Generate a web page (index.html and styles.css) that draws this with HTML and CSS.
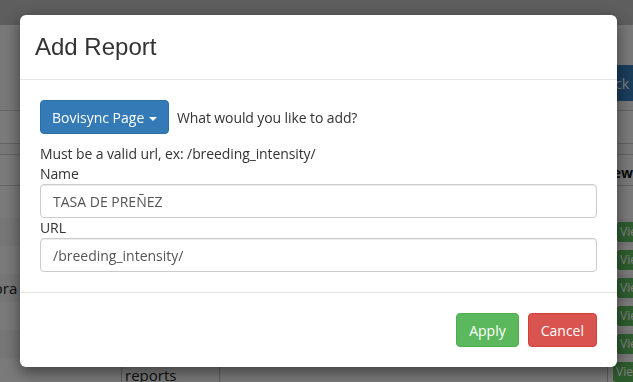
FILE: index.html
```html
<!DOCTYPE html>
<html lang="en">

<head>
    <meta charset="UTF-8">
    <meta name="viewport" content="width=device-width, initial-scale=1.0">
    <title>Add Report</title>
    <link rel="stylesheet" href="styles.css">
</head>

<body>

    <!-- Page behind the modal -->
    <div class="page">
        <div class="topbar"></div>
        <div class="toolbar">
            <button class="btn-back">Back</button>
        </div>
        <div class="filter-row"></div>
        <div class="spacer-row"></div>
        <div class="table-head">
            <span class="head-view">View</span>
        </div>
        <div class="first-row"></div>
        <div class="row"><span class="view-tag">View</span></div>
        <div class="row"><span class="view-tag">View</span></div>
        <div class="row"><span class="cell-left">Libra</span><span class="view-tag">View</span></div>
        <div class="row"><span class="view-tag">View</span></div>
        <div class="row"><span class="view-tag">View</span></div>
        <div class="row last-row">
            <span class="cell-a"></span>
            <span class="cell-b">reports</span>
            <span class="cell-c"></span>
            <span class="view-tag">View</span>
        </div>
    </div>

    <!-- Modal -->
    <div class="backdrop">
        <div class="modal">
            <div class="modal-header">
                <h4 class="modal-title">Add Report</h4>
            </div>
            <div class="modal-body">
                <div class="type-row">
                    <button class="btn btn-primary">Bovisync Page <span class="caret"></span></button>
                    <span class="type-hint">What would you like to add?</span>
                </div>
                <p class="help">Must be a valid url, ex: /breeding_intensity/</p>
                <label class="field-label">Name</label>
                <input class="form-control" type="text" value="TASA DE PREÑEZ">
                <label class="field-label">URL</label>
                <input class="form-control" type="text" value="/breeding_intensity/">
            </div>
            <div class="modal-footer">
                <button class="btn btn-success">Apply</button>
                <button class="btn btn-danger">Cancel</button>
            </div>
        </div>
    </div>

</body>

</html>
```

FILE: styles.css
```css
* {
    box-sizing: border-box;
}

html,
body {
    height: 382px;
    overflow: hidden;
}

body {
    margin: 0;
    font-family: "Open Sans", Arial, sans-serif;
    font-size: 14px;
    color: #333;
    background-color: #f0f0f0;
}

/* Pagina de fondo */
.page {
    width: 100%;
    height: 382px;
    overflow: hidden;
}

.topbar {
    height: 25px;
    background-color: #bcbcbc;
}

.toolbar {
    height: 86px;
    display: flex;
    justify-content: flex-end;
    align-items: flex-start;
    border-bottom: 1px solid #c8c8c8;
}

.btn-back {
    margin-top: 40px;
    margin-right: -8px;
    height: 36px;
    padding: 0 12px;
    background-color: #337ab7;
    color: white;
    border: none;
    border-radius: 4px;
    font-family: inherit;
    font-size: 14px;
}

.filter-row {
    height: 33px;
    border-bottom: 1px solid #c8c8c8;
    background-color: #f4f4f4;
}

.spacer-row {
    height: 11px;
    border-bottom: 1px solid #c8c8c8;
}

.table-head {
    height: 31px;
    display: flex;
    justify-content: flex-end;
    align-items: center;
    border-bottom: 1px solid #c8c8c8;
    background-color: #f4f4f4;
}

.head-view {
    font-weight: bold;
    color: #111;
    margin-right: 0;
    padding-top: 5px;
}

.first-row {
    height: 32px;
    background-color: #f4f4f4;
}

.row {
    height: 28px;
    display: flex;
    align-items: center;
    justify-content: flex-end;
    background-color: #ececec;
}

.row:nth-child(even) {
    background-color: #f5f5f5;
}

.cell-left {
    margin-right: auto;
    margin-left: -18px;
    font-size: 15px;
    color: #222;
}

.last-row {
    height: 40px;
    align-items: stretch;
}

.cell-a {
    width: 122px;
    border-right: 1px solid #bbb;
}

.cell-b {
    width: 98px;
    border-right: 1px solid #bbb;
    padding-top: 7px;
    padding-left: 3px;
    font-size: 15px;
    color: #222;
}

.cell-c {
    flex: 1;
    border-right: 1px solid #bbb;
}

.view-tag {
    width: 16px;
    height: 20px;
    margin-left: 27px;
    padding: 2px 0 0 3px;
    background-color: #5cb85c;
    color: white;
    font-size: 12px;
    line-height: 16px;
    border-radius: 3px 0 0 3px;
    overflow: hidden;
    white-space: nowrap;
}

.last-row .view-tag {
    width: 20px;
    margin-left: 5px;
    margin-top: 4px;
}

/* Fondo oscuro del modal */
.backdrop {
    position: fixed;
    top: 0;
    left: 0;
    right: 0;
    bottom: 0;
    background-color: rgba(0, 0, 0, 0.5);
}

.modal {
    margin: 15px 16px 0 20px;
    background-color: white;
    border-radius: 6px;
    box-shadow: 0 5px 15px rgba(0, 0, 0, 0.5);
}

.modal-header {
    padding: 15px;
    border-bottom: 1px solid #e5e5e5;
}

.modal-title {
    margin: 0;
    font-family: "Liberation Sans", Arial, sans-serif;
    font-size: 24px;
    font-weight: normal;
    line-height: 34px;
    color: #333;
}

.modal-body {
    padding: 20px;
}

.type-row {
    display: flex;
    align-items: center;
    gap: 8px;
    margin-bottom: 10px;
}

.btn {
    height: 34px;
    padding: 0 12px;
    font-family: "Open Sans", Arial, sans-serif;
    font-size: 14px;
    color: white;
    border: 1px solid transparent;
    border-radius: 4px;
    cursor: pointer;
}

.btn-primary {
    padding: 0 11px;
    background-color: #337ab7;
    border-color: #2e6da4;
}

.btn-success {
    background-color: #5cb85c;
    border-color: #4cae4c;
}

.btn-danger {
    background-color: #d9534f;
    border-color: #d43f3a;
}

.caret {
    display: inline-block;
    width: 0;
    height: 0;
    margin-left: 1px;
    vertical-align: middle;
    border-top: 4px solid white;
    border-left: 4px solid transparent;
    border-right: 4px solid transparent;
}

.type-hint,
.help,
.field-label {
    letter-spacing: -0.1px;
}

.help,
.field-label {
    display: block;
    margin: 0;
    line-height: 20px;
}

.form-control {
    display: block;
    width: 100%;
    height: 34px;
    padding: 6px 12px;
    font-family: "Open Sans", Arial, sans-serif;
    font-size: 14px;
    color: #555;
    border: 1px solid #ccc;
    border-radius: 4px;
    box-shadow: inset 0 1px 1px rgba(0, 0, 0, 0.075);
}

.modal-footer {
    padding: 20px;
    display: flex;
    justify-content: flex-end;
    gap: 9px;
    border-top: 1px solid #e5e5e5;
}
```
